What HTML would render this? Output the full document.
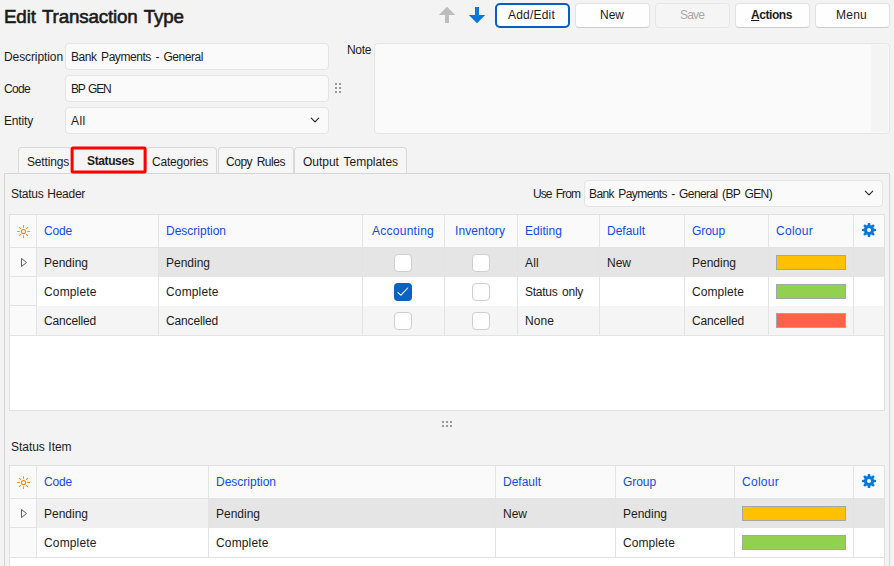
<!DOCTYPE html>
<html><head><meta charset="utf-8"><title>Edit Transaction Type</title>
<style>
html,body{margin:0;padding:0;}
body{width:894px;height:566px;overflow:hidden;background:#f3f3f3;position:relative;font-family:"Liberation Sans",sans-serif;font-size:12px;color:#1b1b1b;}
div,span,svg{position:absolute;box-sizing:border-box;}
.t{white-space:nowrap;line-height:normal;}
.inp{background:#fafafa;border:1px solid #e4e4e4;border-radius:4px;}
.btn{background:#fefefe;border:1px solid #e2e2e2;border-bottom-color:#cdcdcd;border-radius:4px;}
.tab{background:#f6f6f6;border:1px solid #d9d9d9;border-bottom:none;border-radius:4px 4px 0 0;}
.cb{background:#fff;border:1px solid #cfcfcf;border-radius:4px;}
.sw{border:1px solid #a6a6a6;}
.vl{background:#e3e3e3;width:1px;}
.hl{background:#e3e3e3;height:1px;}
</style></head><body>
<span class="t" style="left:4px;top:5.99px;font-size:18.8px;letter-spacing:-0.172px;word-spacing:1.6px;-webkit-text-stroke:0.6px #1b1b1b;">Edit Transaction Type</span>
<svg style="left:439px;top:7px" width="16" height="16" viewBox="0 0 16 16" overflow="visible"><path d="M8 -0.2 L16.2 8 L10 8 L10 16 L6 16 L6 8 L-0.2 8 Z" fill="#bdbdbd"/></svg>
<svg style="left:469px;top:7px" width="16" height="16" viewBox="0 0 16 16" overflow="visible"><path d="M8 16.2 L16.2 8 L10 8 L10 0 L6 0 L6 8 L-0.2 8 Z" fill="#0877d8"/></svg>
<div class="btn" style="left:495px;top:3px;width:75px;height:25px;border:2px solid #0a5cbd;border-radius:5px;background:#fff;"></div>
<div class="btn" style="left:575px;top:3px;width:75px;height:25px;"></div>
<div class="btn" style="left:655px;top:3px;width:75px;height:25px;background:#f5f5f5;border-color:#e6e6e6;"></div>
<div class="btn" style="left:735px;top:3px;width:75px;height:25px;"></div>
<div class="btn" style="left:815px;top:3px;width:75px;height:25px;"></div>
<span class="t" style="left:508px;top:8.14px;font-size:12px;letter-spacing:0.207px;">Add/Edit</span>
<span class="t" style="left:600px;top:8.14px;font-size:12px;letter-spacing:-0.005px;">New</span>
<span class="t" style="left:680px;top:8.14px;font-size:12px;letter-spacing:-0.836px;color:#a9a9a9;">Save</span>
<span class="t" style="left:751px;top:8.14px;font-size:12px;letter-spacing:-0.429px;font-weight:bold;"><u>A</u>ctions</span>
<span class="t" style="left:836px;top:8.14px;font-size:12px;letter-spacing:0.246px;">Menu</span>
<span class="t" style="left:4px;top:50.14px;font-size:12px;letter-spacing:-0.094px;">Description</span>
<span class="t" style="left:4px;top:82.14px;font-size:12px;letter-spacing:-0.672px;">Code</span>
<span class="t" style="left:4px;top:114.14px;font-size:12px;letter-spacing:-0.167px;">Entity</span>
<div class="inp" style="left:65px;top:43px;width:264px;height:27px;"></div>
<div class="inp" style="left:65px;top:75px;width:264px;height:27px;"></div>
<div class="inp" style="left:65px;top:107px;width:264px;height:27px;"></div>
<span class="t" style="left:71px;top:50.14px;font-size:12px;letter-spacing:-0.442px;word-spacing:1.6px;">Bank Payments - General</span>
<span class="t" style="left:71px;top:82.14px;font-size:12px;letter-spacing:-1.202px;word-spacing:1.6px;">BP GEN</span>
<span class="t" style="left:71px;top:114.14px;font-size:12px;letter-spacing:0.385px;">All</span>
<svg style="left:309px;top:115px" width="12" height="10" viewBox="0 0 12 10"><path d="M2.3 3.2 L6 6.8 L9.7 3.2" fill="none" stroke="#222" stroke-width="1.1" stroke-linecap="round" stroke-linejoin="round"/></svg>
<div class="" style="left:335px;top:83px;width:2px;height:2px;background:#9a9a9a;"></div>
<div class="" style="left:339px;top:83px;width:2px;height:2px;background:#9a9a9a;"></div>
<div class="" style="left:335px;top:87px;width:2px;height:2px;background:#9a9a9a;"></div>
<div class="" style="left:339px;top:87px;width:2px;height:2px;background:#9a9a9a;"></div>
<div class="" style="left:335px;top:91px;width:2px;height:2px;background:#9a9a9a;"></div>
<div class="" style="left:339px;top:91px;width:2px;height:2px;background:#9a9a9a;"></div>
<span class="t" style="left:347px;top:43.14px;font-size:12px;letter-spacing:-0.336px;">Note</span>
<div class="inp" style="left:374px;top:43px;width:516px;height:91px;"></div>
<div class="" style="left:871px;top:45px;width:17px;height:87px;background:#f4f4f4;"></div>
<div class="tab" style="left:18px;top:147px;width:54px;height:27px;"></div>
<div class="tab" style="left:146px;top:147px;width:71px;height:27px;"></div>
<div class="tab" style="left:218px;top:147px;width:76px;height:27px;"></div>
<div class="tab" style="left:294px;top:147px;width:113px;height:27px;"></div>
<div class="" style="left:4px;top:173px;width:886px;height:400px;border:1px solid #d6d6d6;background:#f3f3f3;"></div>
<svg style="left:68px;top:144px" width="82" height="32" viewBox="68 144 82 32"><rect x="72.1" y="147.9" width="73" height="24" rx="1" fill="#f4f4f4" stroke="#ff0000" stroke-width="3"/></svg>
<span class="t" style="left:27px;top:155.14px;font-size:12px;letter-spacing:-0.168px;">Settings</span>
<span class="t" style="left:87px;top:154.14px;font-size:12px;letter-spacing:-0.377px;font-weight:bold;">Statuses</span>
<span class="t" style="left:152px;top:155.14px;font-size:12px;letter-spacing:-0.203px;">Categories</span>
<span class="t" style="left:226px;top:155.14px;font-size:12px;letter-spacing:-0.463px;word-spacing:1.6px;">Copy Rules</span>
<span class="t" style="left:303px;top:155.14px;font-size:12px;letter-spacing:-0.025px;word-spacing:1.6px;">Output Templates</span>
<span class="t" style="left:11px;top:187.14px;font-size:12px;letter-spacing:-0.268px;word-spacing:0.8px;">Status Header</span>
<span class="t" style="left:533px;top:187.14px;font-size:12px;letter-spacing:-0.909px;word-spacing:1.6px;">Use From</span>
<div class="inp" style="left:584px;top:180px;width:299px;height:27px;"></div>
<span class="t" style="left:589px;top:187.14px;font-size:12px;letter-spacing:-0.587px;word-spacing:1.6px;">Bank Payments - General (BP GEN)</span>
<svg style="left:863px;top:188px" width="12" height="10" viewBox="0 0 12 10"><path d="M2.3 3.2 L6 6.8 L9.7 3.2" fill="none" stroke="#222" stroke-width="1.1" stroke-linecap="round" stroke-linejoin="round"/></svg>
<div class="" style="left:9px;top:214px;width:876px;height:197px;background:#fff;border:1px solid #e0e0e0;"></div>
<div class="" style="left:10px;top:215px;width:874px;height:33px;background:#fafafa;"></div>
<div class="hl" style="left:10px;top:247px;width:874px;height:1px;"></div>
<div class="" style="left:10px;top:248px;width:27px;height:29px;background:#fafafa;"></div>
<div class="" style="left:37px;top:248px;width:847px;height:29px;background:#e5e5e5;"></div>
<div class="" style="left:37px;top:248px;width:121px;height:29px;background:#f0f0f0;"></div>
<div class="hl" style="left:10px;top:276px;width:26px;height:1px;"></div>
<div class="" style="left:10px;top:277px;width:27px;height:29px;background:#fafafa;"></div>
<div class="hl" style="left:10px;top:305px;width:26px;height:1px;"></div>
<div class="" style="left:10px;top:306px;width:27px;height:30px;background:#fafafa;"></div>
<div class="" style="left:37px;top:306px;width:847px;height:30px;background:#f5f5f5;"></div>
<div class="hl" style="left:10px;top:335px;width:874px;height:1px;"></div>
<div class="vl" style="left:36px;top:215px;width:1px;height:121px;"></div>
<div class="vl" style="left:158px;top:215px;width:1px;height:121px;"></div>
<div class="vl" style="left:362px;top:215px;width:1px;height:121px;"></div>
<div class="vl" style="left:444px;top:215px;width:1px;height:121px;"></div>
<div class="vl" style="left:517px;top:215px;width:1px;height:121px;"></div>
<div class="vl" style="left:599px;top:215px;width:1px;height:121px;"></div>
<div class="vl" style="left:684px;top:215px;width:1px;height:121px;"></div>
<div class="vl" style="left:768px;top:215px;width:1px;height:121px;"></div>
<div class="vl" style="left:853px;top:215px;width:1px;height:121px;"></div>
<svg style="left:16px;top:224px" width="15" height="15" viewBox="0 0 15 15"><g transform="translate(0.5,0.5)" stroke="#ff8a00" stroke-width="1.05" fill="none" stroke-linecap="round"><circle cx="7" cy="7" r="2.1"/><path d="M7 1V2.8M7 11.2V13M1 7H2.8M11.2 7H13M2.9 2.9L4 4M10 10L11.1 11.1M2.9 11.1L4 10M10 4L11.1 2.9"/></g></svg>
<svg style="left:862px;top:223px" width="14" height="14" viewBox="-7 -7 14 14"><g fill="#0877d8"><circle r="5"/><path d="M-1.6 -4 L-1.1 -7 L1.1 -7 L1.6 -4 Z" transform="rotate(0)"/><path d="M-1.6 -4 L-1.1 -7 L1.1 -7 L1.6 -4 Z" transform="rotate(45)"/><path d="M-1.6 -4 L-1.1 -7 L1.1 -7 L1.6 -4 Z" transform="rotate(90)"/><path d="M-1.6 -4 L-1.1 -7 L1.1 -7 L1.6 -4 Z" transform="rotate(135)"/><path d="M-1.6 -4 L-1.1 -7 L1.1 -7 L1.6 -4 Z" transform="rotate(180)"/><path d="M-1.6 -4 L-1.1 -7 L1.1 -7 L1.6 -4 Z" transform="rotate(225)"/><path d="M-1.6 -4 L-1.1 -7 L1.1 -7 L1.6 -4 Z" transform="rotate(270)"/><path d="M-1.6 -4 L-1.1 -7 L1.1 -7 L1.6 -4 Z" transform="rotate(315)"/></g><circle r="2" fill="#fafafa"/></svg>
<span class="t" style="left:44px;top:224.14px;font-size:12px;letter-spacing:-0.172px;color:#0f4ce6;">Code</span>
<span class="t" style="left:166px;top:224.14px;font-size:12px;letter-spacing:-0.003px;color:#0f4ce6;">Description</span>
<span class="t" style="left:372px;top:224.14px;font-size:12px;letter-spacing:0.264px;color:#0f4ce6;">Accounting</span>
<span class="t" style="left:455px;top:224.14px;font-size:12px;letter-spacing:0.073px;color:#0f4ce6;">Inventory</span>
<span class="t" style="left:525px;top:224.14px;font-size:12px;letter-spacing:0.045px;color:#0f4ce6;">Editing</span>
<span class="t" style="left:607px;top:224.14px;font-size:12px;letter-spacing:-0.002px;color:#0f4ce6;">Default</span>
<span class="t" style="left:692px;top:224.14px;font-size:12px;letter-spacing:-0.069px;color:#0f4ce6;">Group</span>
<span class="t" style="left:776px;top:224.14px;font-size:12px;letter-spacing:0.273px;color:#0f4ce6;">Colour</span>
<svg style="left:20px;top:258px" width="8" height="10" viewBox="0 0 8 10"><path d="M1.5 0.5 L6.6 4.5 L1.5 8.5 Z" fill="none" stroke="#5e5e5e" stroke-width="1"/></svg>
<span class="t" style="left:44px;top:256.14px;font-size:12px;letter-spacing:-0.004px;">Pending</span>
<span class="t" style="left:166px;top:256.14px;font-size:12px;letter-spacing:-0.004px;">Pending</span>
<span class="t" style="left:525px;top:256.14px;font-size:12px;letter-spacing:0.219px;">All</span>
<span class="t" style="left:607px;top:256.14px;font-size:12px;letter-spacing:-0.005px;">New</span>
<span class="t" style="left:692px;top:256.14px;font-size:12px;letter-spacing:-0.004px;">Pending</span>
<div class="cb" style="left:394px;top:254px;width:18px;height:18px;"></div>
<div class="cb" style="left:472px;top:254px;width:18px;height:18px;"></div>
<div class="sw" style="left:776px;top:255px;width:70px;height:15px;background:#ffc000;"></div>
<span class="t" style="left:44px;top:285.14px;font-size:12px;letter-spacing:0.143px;">Complete</span>
<span class="t" style="left:166px;top:285.14px;font-size:12px;letter-spacing:0.143px;">Complete</span>
<span class="t" style="left:525px;top:285.14px;font-size:12px;letter-spacing:-0.268px;word-spacing:1.6px;">Status only</span>
<span class="t" style="left:692px;top:285.14px;font-size:12px;letter-spacing:0.080px;">Complete</span>
<div class="" style="left:394px;top:283px;width:18px;height:18px;background:#0a63c2;border-radius:4px;"></div>
<svg style="left:394px;top:283px" width="18" height="18" viewBox="0 0 18 18"><path d="M4 9.6 L6.9 12.2 L13.8 5" fill="none" stroke="#fff" stroke-width="1.05" stroke-linecap="round"/></svg>
<div class="cb" style="left:472px;top:283px;width:18px;height:18px;"></div>
<div class="sw" style="left:776px;top:284px;width:70px;height:15px;background:#92d050;"></div>
<span class="t" style="left:44px;top:314.14px;font-size:12px;letter-spacing:-0.153px;">Cancelled</span>
<span class="t" style="left:166px;top:314.14px;font-size:12px;letter-spacing:-0.153px;">Cancelled</span>
<span class="t" style="left:525px;top:314.14px;font-size:12px;letter-spacing:0.078px;">None</span>
<span class="t" style="left:692px;top:314.14px;font-size:12px;letter-spacing:-0.153px;">Cancelled</span>
<div class="cb" style="left:394px;top:312px;width:18px;height:18px;"></div>
<div class="cb" style="left:472px;top:312px;width:18px;height:18px;"></div>
<div class="sw" style="left:776px;top:313px;width:70px;height:15px;background:#ff6347;"></div>
<div class="" style="left:442px;top:421px;width:2px;height:2px;background:#9a9a9a;"></div>
<div class="" style="left:446px;top:421px;width:2px;height:2px;background:#9a9a9a;"></div>
<div class="" style="left:450px;top:421px;width:2px;height:2px;background:#9a9a9a;"></div>
<div class="" style="left:442px;top:425px;width:2px;height:2px;background:#9a9a9a;"></div>
<div class="" style="left:446px;top:425px;width:2px;height:2px;background:#9a9a9a;"></div>
<div class="" style="left:450px;top:425px;width:2px;height:2px;background:#9a9a9a;"></div>
<span class="t" style="left:11px;top:440.14px;font-size:12px;letter-spacing:-0.032px;word-spacing:0.2px;">Status Item</span>
<div class="" style="left:9px;top:465px;width:876px;height:116px;background:#fff;border:1px solid #e0e0e0;"></div>
<div class="" style="left:10px;top:466px;width:874px;height:33px;background:#fafafa;"></div>
<div class="hl" style="left:10px;top:498px;width:874px;height:1px;"></div>
<div class="" style="left:10px;top:499px;width:27px;height:29px;background:#fafafa;"></div>
<div class="" style="left:37px;top:499px;width:847px;height:29px;background:#e5e5e5;"></div>
<div class="" style="left:37px;top:499px;width:171px;height:29px;background:#f0f0f0;"></div>
<div class="hl" style="left:10px;top:527px;width:26px;height:1px;"></div>
<div class="" style="left:10px;top:528px;width:27px;height:30px;background:#fafafa;"></div>
<div class="hl" style="left:10px;top:557px;width:874px;height:1px;"></div>
<div class="vl" style="left:36px;top:466px;width:1px;height:92px;"></div>
<div class="vl" style="left:208px;top:466px;width:1px;height:92px;"></div>
<div class="vl" style="left:495px;top:466px;width:1px;height:92px;"></div>
<div class="vl" style="left:615px;top:466px;width:1px;height:92px;"></div>
<div class="vl" style="left:734px;top:466px;width:1px;height:92px;"></div>
<div class="vl" style="left:853px;top:466px;width:1px;height:92px;"></div>
<svg style="left:16px;top:475px" width="15" height="15" viewBox="0 0 15 15"><g transform="translate(0.5,0.5)" stroke="#ff8a00" stroke-width="1.05" fill="none" stroke-linecap="round"><circle cx="7" cy="7" r="2.1"/><path d="M7 1V2.8M7 11.2V13M1 7H2.8M11.2 7H13M2.9 2.9L4 4M10 10L11.1 11.1M2.9 11.1L4 10M10 4L11.1 2.9"/></g></svg>
<svg style="left:862px;top:474px" width="14" height="14" viewBox="-7 -7 14 14"><g fill="#0877d8"><circle r="5"/><path d="M-1.6 -4 L-1.1 -7 L1.1 -7 L1.6 -4 Z" transform="rotate(0)"/><path d="M-1.6 -4 L-1.1 -7 L1.1 -7 L1.6 -4 Z" transform="rotate(45)"/><path d="M-1.6 -4 L-1.1 -7 L1.1 -7 L1.6 -4 Z" transform="rotate(90)"/><path d="M-1.6 -4 L-1.1 -7 L1.1 -7 L1.6 -4 Z" transform="rotate(135)"/><path d="M-1.6 -4 L-1.1 -7 L1.1 -7 L1.6 -4 Z" transform="rotate(180)"/><path d="M-1.6 -4 L-1.1 -7 L1.1 -7 L1.6 -4 Z" transform="rotate(225)"/><path d="M-1.6 -4 L-1.1 -7 L1.1 -7 L1.6 -4 Z" transform="rotate(270)"/><path d="M-1.6 -4 L-1.1 -7 L1.1 -7 L1.6 -4 Z" transform="rotate(315)"/></g><circle r="2" fill="#fafafa"/></svg>
<span class="t" style="left:44px;top:475.14px;font-size:12px;letter-spacing:-0.172px;color:#0f4ce6;">Code</span>
<span class="t" style="left:216px;top:475.14px;font-size:12px;letter-spacing:-0.003px;color:#0f4ce6;">Description</span>
<span class="t" style="left:503px;top:475.14px;font-size:12px;letter-spacing:-0.002px;color:#0f4ce6;">Default</span>
<span class="t" style="left:623px;top:475.14px;font-size:12px;letter-spacing:-0.069px;color:#0f4ce6;">Group</span>
<span class="t" style="left:742px;top:475.14px;font-size:12px;letter-spacing:0.273px;color:#0f4ce6;">Colour</span>
<svg style="left:20px;top:509px" width="8" height="10" viewBox="0 0 8 10"><path d="M1.5 0.5 L6.6 4.5 L1.5 8.5 Z" fill="none" stroke="#5e5e5e" stroke-width="1"/></svg>
<span class="t" style="left:44px;top:507.14px;font-size:12px;letter-spacing:-0.004px;">Pending</span>
<span class="t" style="left:216px;top:507.14px;font-size:12px;letter-spacing:-0.004px;">Pending</span>
<span class="t" style="left:503px;top:507.14px;font-size:12px;letter-spacing:-0.005px;">New</span>
<span class="t" style="left:623px;top:507.14px;font-size:12px;letter-spacing:-0.004px;">Pending</span>
<div class="sw" style="left:742px;top:506px;width:104px;height:15px;background:#ffc000;"></div>
<span class="t" style="left:44px;top:536.14px;font-size:12px;letter-spacing:0.143px;">Complete</span>
<span class="t" style="left:216px;top:536.14px;font-size:12px;letter-spacing:0.143px;">Complete</span>
<span class="t" style="left:623px;top:536.14px;font-size:12px;letter-spacing:0.080px;">Complete</span>
<div class="sw" style="left:742px;top:535px;width:104px;height:15px;background:#92d050;"></div>
</body></html>
